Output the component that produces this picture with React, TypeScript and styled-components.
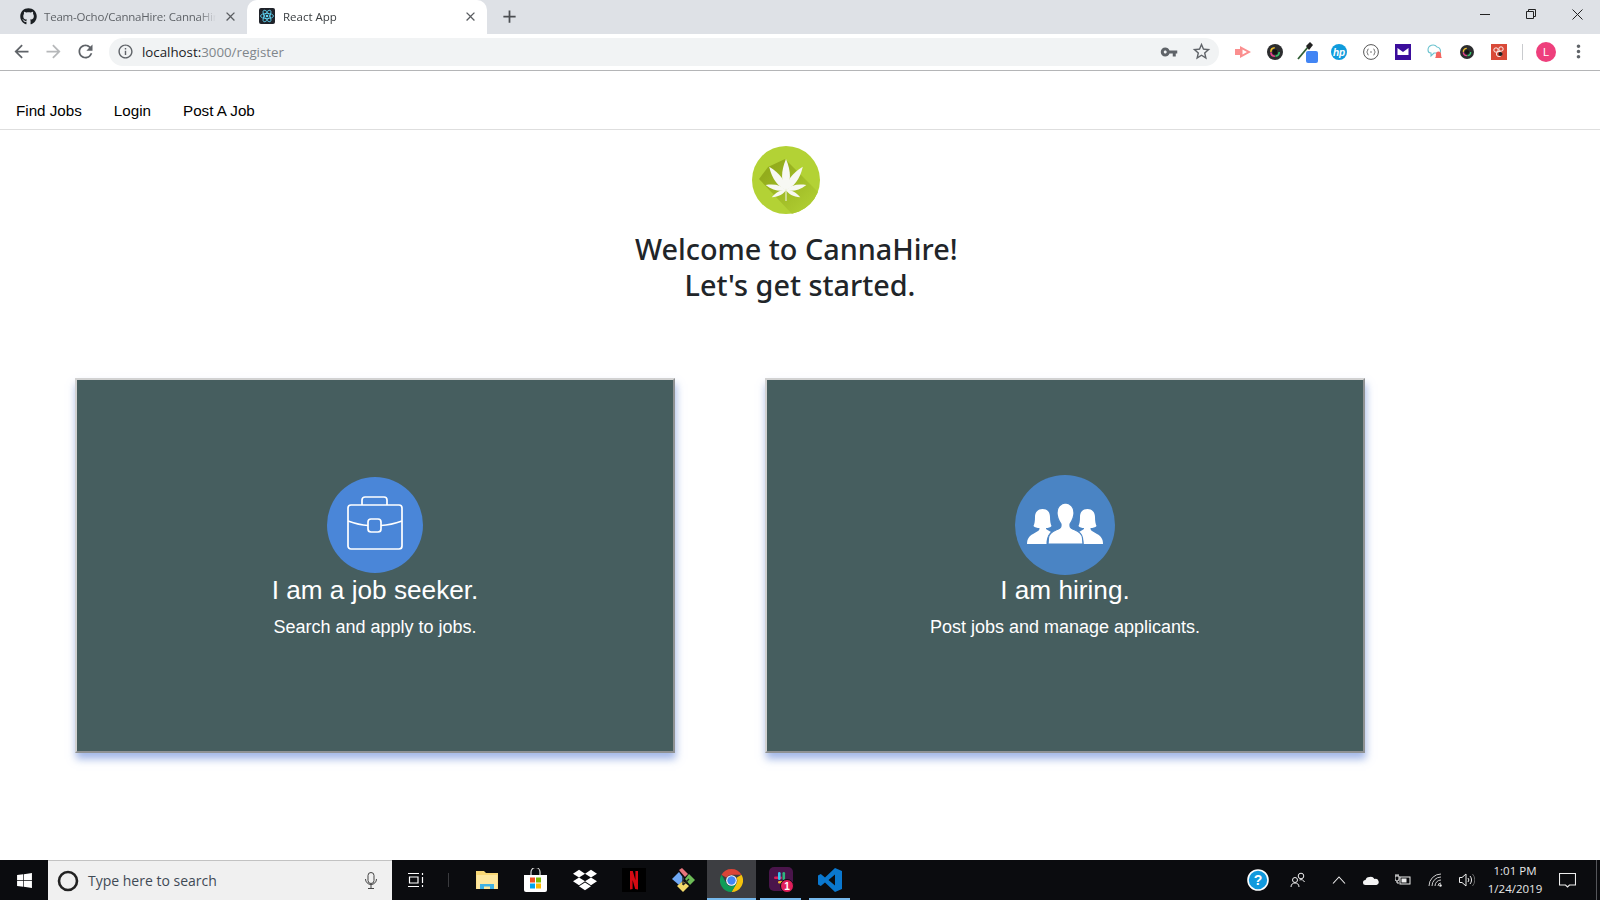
import React from "react";
import styled, { createGlobalStyle } from "styled-components";
import {
  MdAdd,
  MdArrowBack,
  MdArrowForward,
  MdClose,
  MdInfoOutline,
  MdMoreVert,
  MdRefresh,
  MdStarBorder,
  MdVpnKey,
} from "react-icons/md";
import { FaDropbox, FaGithub, FaWindows } from "react-icons/fa";

const GlobalStyle = createGlobalStyle`
  html, body {
    margin: 0;
    padding: 0;
    background: #fff;
    overflow: hidden;
  }
  * {
    box-sizing: border-box;
  }
`;

const Screen = styled.div`
  width: 1600px;
  height: 900px;
  display: flex;
  flex-direction: column;
  font-family: "Liberation Sans", Arial, sans-serif;
  overflow: hidden;
`;

/* browser chrome */
const TabStrip = styled.div`
  height: 34px;
  background: #dee1e6;
  display: flex;
  align-items: stretch;
  font-family: "Open Sans", "Noto Sans", sans-serif;
  font-size: 11.5px;
`;

const Tab = styled.div<{ $active?: boolean }>`
  width: ${(p) => (p.$active ? "240px" : "239px")};
  margin-left: ${(p) => (p.$active ? "0" : "8px")};
  display: flex;
  align-items: center;
  padding: 0 9px 2px 12px;
  gap: ${(p) => (p.$active ? "8px" : "7px")};
  background: ${(p) => (p.$active ? "#fff" : "transparent")};
  border-radius: 10px 10px 0 0;
  color: ${(p) => (p.$active ? "#3c4043" : "#5f6368")};
  letter-spacing: ${(p) => (p.$active ? "0" : "-0.2px")};
`;

const TabTitle = styled.span`
  flex: 1;
  white-space: nowrap;
  overflow: hidden;
  -webkit-mask-image: linear-gradient(90deg, #000 90%, transparent);
  mask-image: linear-gradient(90deg, #000 90%, transparent);
`;

const TabClose = styled(MdClose)`
  flex: none;
  font-size: 15px;
  color: #5a5d61;
`;

const NewTab = styled(MdAdd)`
  align-self: center;
  margin: 0 0 1px 12px;
  font-size: 21px;
  color: #4b4e52;
`;

const WindowControls = styled.div`
  margin-left: auto;
  display: flex;
  height: 28px;
  align-items: center;
`;

const WindowButton = styled.div`
  width: 46px;
  display: flex;
  justify-content: center;
  align-items: center;
`;

const Toolbar = styled.div`
  height: 37px;
  background: #fff;
  border-bottom: 1px solid #b4b5b7;
  display: flex;
  align-items: center;
  padding: 0 6px 1px 5px;
`;

const NavIcon = styled.div<{ $muted?: boolean }>`
  width: 32px;
  display: flex;
  justify-content: center;
  font-size: 21px;
  color: ${(p) => (p.$muted ? "#b6b8ba" : "#5f6368")};
`;

const Omnibox = styled.div`
  width: 1110px;
  height: 28px;
  margin: 0 8px 0 8px;
  padding: 0 2px 0 8px;
  border-radius: 14px;
  background: #f1f3f4;
  display: flex;
  align-items: center;
  color: #5f6368;
  font-family: "Open Sans", "Noto Sans", sans-serif;
  font-size: 13.3px;
`;

const Url = styled.span`
  margin-left: 8px;
  color: #80868b;
  flex: 1;
`;

const Host = styled.span`
  color: #202124;
`;

const OmniAction = styled.div`
  width: 32px;
  display: flex;
  justify-content: center;
  font-size: 18px;
  color: #5f6368;
`;

const Extension = styled.div`
  width: 32px;
  height: 24px;
  display: flex;
  align-items: center;
  justify-content: center;
  position: relative;
`;

const ToolbarDivider = styled.div`
  width: 1px;
  height: 16px;
  background: #c9cbce;
  margin: 0 7px 0 7px;
`;

const Avatar = styled.div`
  width: 20px;
  height: 20px;
  margin: 0 6px;
  border-radius: 50%;
  background: #ee3f7c;
  color: #fff;
  font-size: 11px;
  display: flex;
  align-items: center;
  justify-content: center;
`;

/* page */
const NavBar = styled.nav`
  height: 59px;
  flex: none;
  padding: 20px 16px 0;
  display: flex;
  align-items: center;
  gap: 32px;
  border-bottom: 1px solid #dedede;
`;

const NavLink = styled.a`
  color: #000;
  font-size: 15.2px;
  text-decoration: none;
`;

const Main = styled.main`
  flex: 1;
  background: #fff;
`;

const Hero = styled.header`
  padding-top: 16px;
  display: flex;
  flex-direction: column;
  align-items: center;
`;

const Logo = styled.svg`
  width: 68px;
  height: 68px;
  margin-right: 28px;
`;

const Heading = styled.h1`
  margin: 17px 0 0;
  text-align: center;
  color: #212529;
  font-family: "Noto Sans", "Open Sans", sans-serif;
  font-weight: 500;
  font-size: 28.8px;
  line-height: 36px;
`;

const Cards = styled.section`
  margin-top: 75px;
  padding-left: 75px;
  display: flex;
  gap: 90px;
`;

const Card = styled.div`
  width: 600px;
  height: 375px;
  padding-top: 95px;
  background: #465e5f;
  border: 2px solid #d2d2d2;
  border-right-color: #8f9293;
  border-bottom-color: #8f9293;
  box-shadow: 1px 6px 8px rgba(100, 135, 215, 0.6);
  display: flex;
  flex-direction: column;
  align-items: center;
  color: #fff;
`;

const IconCircle = styled.div<{ $size: number; $color: string }>`
  width: ${(p) => p.$size}px;
  height: ${(p) => p.$size}px;
  margin-top: ${(p) => (100 - p.$size) / 2}px;
  margin-bottom: ${(p) => (100 - p.$size) / 2}px;
  border-radius: 50%;
  background: ${(p) => p.$color};
  display: flex;
  align-items: center;
  justify-content: center;
`;

const BriefcaseIcon = styled.svg`
  width: 56px;
  height: 54px;
  margin-bottom: 5px;
`;

const TeamIcon = styled.svg`
  width: 76px;
  height: 42px;
  margin-bottom: 2px;
`;

const CardTitle = styled.div`
  font-size: 26.2px;
  line-height: 30px;
`;

const CardText = styled.div`
  font-size: 18px;
  line-height: 22px;
  margin-top: 11px;
`;

/* taskbar */
const Taskbar = styled.footer`
  height: 40px;
  flex: none;
  background: #0b0c0f;
  display: flex;
  align-items: stretch;
  color: #fff;
`;

const StartButton = styled.div`
  width: 48px;
  display: flex;
  align-items: center;
  justify-content: center;
  font-size: 17px;
`;

const SearchBox = styled.div`
  width: 344px;
  padding: 0 15px 0 9px;
  background: #f0f0f0;
  border-top: 1px solid #c2c2c2;
  display: flex;
  align-items: center;
  gap: 9px;
  color: #3f4a55;
  font-family: "Open Sans", "Noto Sans", sans-serif;
  font-size: 14px;
`;

const SearchText = styled.span`
  flex: 1;
`;

const TaskSlot = styled.div<{ $width?: number; $active?: boolean; $open?: boolean }>`
  width: ${(p) => p.$width ?? 49}px;
  position: relative;
  display: flex;
  align-items: center;
  justify-content: center;
  background: ${(p) => (p.$active ? "#3d3e42" : "transparent")};

  &::after {
    content: "";
    display: ${(p) => (p.$open ? "block" : "none")};
    position: absolute;
    left: ${(p) => (p.$active ? "0" : "4px")};
    right: ${(p) => (p.$active ? "0" : "4px")};
    bottom: 0;
    height: 2px;
    background: #76b9ed;
  }
`;

const TaskSeparator = styled.div`
  width: 1px;
  height: 14px;
  align-self: center;
  margin: 0 13px 0 8px;
  background: #3a3b3e;
`;

const SlackIcon = styled.svg`
  width: 27px;
  height: 27px;
  margin-left: 3px;
`;

const Tray = styled.div`
  margin-left: auto;
  display: flex;
`;

const TrayIcon = styled.div<{ $width?: number }>`
  width: ${(p) => p.$width ?? 32}px;
  display: flex;
  align-items: center;
  justify-content: center;
`;

const Clock = styled.div`
  width: 64px;
  font-family: "Open Sans", "Noto Sans", sans-serif;
  font-size: 11.5px;
  line-height: 18px;
  text-align: center;
  color: #e8e8e8;
  display: flex;
  flex-direction: column;
  justify-content: center;
`;

const ShowDesktop = styled.div`
  width: 10px;
  margin-right: 3px;
  border-right: 1px solid #55565a;
`;

const TrayGap = styled.div`
  width: 5px;
`;

const CannaLogo = () => {
  const leaflets = [
    { angle: 0, len: 31 },
    { angle: 36, len: 28.6 },
    { angle: -36, len: 28.6 },
    { angle: 76, len: 21 },
    { angle: -76, len: 21 },
    { angle: 117, len: 16 },
    { angle: -117, len: 16 },
  ];
  return (
    <Logo viewBox="0 0 68 68">
      <defs>
        <clipPath id="logoClip">
          <circle cx="34" cy="34" r="34" />
        </clipPath>
        <linearGradient id="logoShadow" x1="0.2" y1="0.2" x2="0.95" y2="0.95">
          <stop offset="0" stopColor="#93ac1c" />
          <stop offset="1" stopColor="#b3d235" />
        </linearGradient>
      </defs>
      <circle cx="34" cy="34" r="34" fill="#b3d235" />
      <polygon
        clipPath="url(#logoClip)"
        points="7,33 16,21 33,13 68,48 68,68 40,68"
        fill="url(#logoShadow)"
      />
      <g fill="#f7f8f3">
        {leaflets.map((l) => (
          <path
            key={l.angle}
            transform={`translate(34 44) rotate(${l.angle}) scale(${l.len / 31})`}
            d="M0 0 C-5 -8 -5.5 -18 0 -31 C5.5 -18 5 -8 0 0Z"
          />
        ))}
        <rect x="33.5" y="42" width="1" height="13" />
      </g>
    </Logo>
  );
};

const Briefcase = () => (
  <BriefcaseIcon viewBox="0 0 56 54" fill="none" stroke="#fff" strokeWidth="1.7">
    <path d="M15 9 V4 a3 3 0 0 1 3 -3 h19 a3 3 0 0 1 3 3 V9" />
    <rect x="1" y="9" width="54" height="44" rx="3" />
    <path d="M1 25 Q12 29 21 29.5 M34 29.5 Q44 29 55 25" />
    <rect x="21" y="23" width="13" height="13" rx="3" />
  </BriefcaseIcon>
);

const sideFigure =
  "M15.5 6 c5 0 7.5 3 7.5 8 c0 4 .5 7 1.5 9 c-1 1.5 -3.5 2 -5.5 2 c0 1 .3 1.5 1.5 2 L24 29 c-2.5 2 -4.5 6 -4.5 12 H0 c0 -5 2 -8 6 -10 l5 -3 c1 -.5 1.5 -1.5 1.5 -3 c-2 0 -5 -.5 -6 -2 c1 -2 1.5 -5 1.5 -9 c0 -5 3 -8 7.5 -8Z";

const Team = () => (
  <TeamIcon viewBox="0 0 76 42" fill="#fff">
    <path d={sideFigure} />
    <path d={sideFigure} transform="translate(76 0) scale(-1 1)" />
    <path
      stroke="#4a84c4"
      strokeWidth="1.2"
      d="M38 0 c5.5 0 9 4 9 10 c0 5 -2 8 -4 11 v2 c0 2 2 3 5 4 c5 2 7 4 7.5 8 l.5 6 H21 l.5 -6 c.5 -4 2.5 -6 7.5 -8 c3 -1 5 -2 5 -4 v-2 c-2 -3 -4 -6 -4 -11 c0 -6 3.5 -10 9 -10Z"
    />
  </TeamIcon>
);

const ReactFavicon = () => (
  <svg width="16" height="16" viewBox="0 0 16 16" style={{ flex: "none" }}>
    <rect width="16" height="16" rx="2" fill="#20232a" />
    <g fill="none" stroke="#61dafb" strokeWidth="0.8">
      <ellipse cx="8" cy="8" rx="6.5" ry="2.6" />
      <ellipse cx="8" cy="8" rx="6.5" ry="2.6" transform="rotate(60 8 8)" />
      <ellipse cx="8" cy="8" rx="6.5" ry="2.6" transform="rotate(120 8 8)" />
    </g>
    <circle cx="8" cy="8" r="1.3" fill="#61dafb" />
  </svg>
);

const CameraLens = ({ size }: { size: number }) => (
  <svg width={size} height={size} viewBox="0 0 16 16">
    <circle cx="8" cy="8" r="8" fill="#2c2d2f" />
    <circle cx="8" cy="8" r="4.2" fill="none" stroke="#39c36b" strokeWidth="1.6" strokeDasharray="6 20" />
    <circle cx="8" cy="8" r="4.2" fill="none" stroke="#e8428e" strokeWidth="1.6" strokeDasharray="6 20" strokeDashoffset="-6.5" />
    <circle cx="8" cy="8" r="4.2" fill="none" stroke="#f2c230" strokeWidth="1.6" strokeDasharray="6 20" strokeDashoffset="-13" />
    <circle cx="8" cy="8" r="2.4" fill="#121212" />
  </svg>
);

const Extensions = () => (
  <>
    <Extension>
      <svg width="17" height="14" viewBox="0 0 17 14">
        <rect x="0" y="4" width="5" height="6" fill="#fb8f8f" />
        <path d="M5 1 L16 7 L5 13Z M7.5 4.5 V9.5 L12 7Z" fill="#fb8f8f" fillRule="evenodd" />
      </svg>
    </Extension>
    <Extension>
      <CameraLens size={16} />
    </Extension>
    <Extension>
      <svg width="24" height="24" viewBox="0 0 24 24">
        <path d="M3 19 L13 7" stroke="#2f5d33" strokeWidth="1.8" />
        <path d="M11 6 L15 2 L18 5 L14 10Z" fill="#222" />
        <rect x="11" y="11" width="12" height="12" rx="2" fill="#4285f4" />
      </svg>
    </Extension>
    <Extension>
      <svg width="16" height="16" viewBox="0 0 16 16">
        <circle cx="8" cy="8" r="8" fill="#0f9bdc" />
        <text x="8" y="11.5" fill="#fff" fontSize="10" fontStyle="italic" fontWeight="700" fontFamily="Liberation Sans" textAnchor="middle">
          hp
        </text>
      </svg>
    </Extension>
    <Extension>
      <svg width="16" height="16" viewBox="0 0 16 16" fill="none" stroke="#555">
        <circle cx="8" cy="8" r="7.4" />
        <path d="M5.6 5 q-1 0 -1 1 v1 l-1 1 l1 1 v1 q0 1 1 1 M10.4 5 q1 0 1 1 v1 l1 1 l-1 1 v1 q0 1 -1 1 M7 8 h2" strokeWidth="0.8" />
      </svg>
    </Extension>
    <Extension>
      <svg width="16" height="16" viewBox="0 0 16 16">
        <rect width="16" height="16" fill="#3b0d9c" />
        <path d="M2.5 4 H13.5 V11 H2.5Z" fill="#fff" />
        <path d="M2.5 4 L8 8 L13.5 4" fill="#3b0d9c" />
      </svg>
    </Extension>
    <Extension>
      <svg width="18" height="17" viewBox="0 0 18 17">
        <path d="M2 7 a5 5 0 0 1 9 -3 a4 4 0 0 1 3 6 H8 l-3 3 v-3 a3 3 0 0 1 -3 -3Z" fill="none" stroke="#6cc3cf" strokeWidth="1.1" />
        <path d="M9 15 q1 -1 1 -4 a2.5 2.5 0 0 1 5 0 q0 3 1 4Z" fill="#f4655f" />
      </svg>
    </Extension>
    <Extension>
      <CameraLens size={14} />
    </Extension>
    <Extension>
      <svg width="16" height="16" viewBox="0 0 16 16">
        <rect width="16" height="16" fill="#d94a38" />
        <g fill="none" stroke="#fff" strokeWidth="0.9">
          <circle cx="5" cy="6" r="2.2" />
          <circle cx="10" cy="5" r="2.2" />
          <circle cx="8" cy="10" r="2.6" />
        </g>
        <circle cx="9.5" cy="10" r="2" fill="#222" />
      </svg>
    </Extension>
  </>
);

const ChromeIcon = () => (
  <svg width="23" height="23" viewBox="0 0 24 24">
    <path d="M12 0 A12 12 0 0 1 22.4 6 H12 A6 6 0 0 0 6.8 9 L1.6 6 A12 12 0 0 1 12 0Z" fill="#db4437" />
    <path d="M22.4 6 A12 12 0 0 1 12 24 L17.2 15 A6 6 0 0 0 17.2 9 Z" fill="#f4c20d" />
    <path d="M12 24 A12 12 0 0 1 1.6 6 L6.8 15 A6 6 0 0 0 12 18 L17.2 15Z" fill="#0f9d58" />
    <circle cx="12" cy="12" r="5.6" fill="#fff" />
    <circle cx="12" cy="12" r="4.4" fill="#4285f4" />
  </svg>
);

const TaskIcons = () => (
  <>
    <TaskSlot>
      <svg width="22" height="20" viewBox="0 0 22 20">
        <path d="M0 1 H8 L10 3 H22 V19 H0Z" fill="#f8d775" />
        <rect x="0.5" y="5" width="21" height="14" fill="#fde79f" />
        <path d="M4 19 V14 H18 V19 H14 V16.5 H8 V19Z" fill="#3fb1e3" />
      </svg>
    </TaskSlot>
    <TaskSlot>
      <svg width="23" height="24" viewBox="0 0 23 24">
        <path d="M7 7 V4 a4.5 4.5 0 0 1 9 0 V7" fill="none" stroke="#ddd" strokeWidth="1.2" />
        <path d="M0 7 H23 V22 a2 2 0 0 1 -2 2 H2 a2 2 0 0 1 -2 -2Z" fill="#fff" />
        <rect x="6" y="9.5" width="5" height="5" fill="#f25022" />
        <rect x="12" y="9.5" width="5" height="5" fill="#7fba00" />
        <rect x="6" y="15.5" width="5" height="5" fill="#00a4ef" />
        <rect x="12" y="15.5" width="5" height="5" fill="#ffb900" />
      </svg>
    </TaskSlot>
    <TaskSlot>
      <FaDropbox size={24} color="#fff" />
    </TaskSlot>
    <TaskSlot>
      <svg width="24" height="24" viewBox="0 0 24 24">
        <rect width="24" height="24" fill="#000" />
        <path d="M8 3 H10.8 L16 21.5 L13.2 21 L8 3Z M8 3 H10.6 V21 L8 21.5Z M13.4 3 H16 V21.5 L13.4 21Z" fill="#d50a13" />
      </svg>
    </TaskSlot>
    <TaskSlot>
      <svg width="24" height="24" viewBox="0 0 24 24">
        <path d="M1 11 L8 4 L13 11 L8 17Z" fill="#6fa8f5" />
        <path d="M14 11 L18 6 L24 12 L19 17Z" fill="#6dbb57" />
        <path d="M6 18 L12 13 L18 18 L12 24Z" fill="#f3d96a" />
        <path d="M8 2 L11 0 L17 6 L14 9Z" fill="#e8757c" />
        <path d="M12 9 V17 M12 17 L18 11" stroke="#222" strokeWidth="1.4" fill="none" />
      </svg>
    </TaskSlot>
    <TaskSlot $active $open>
      <ChromeIcon />
    </TaskSlot>
    <TaskSlot $open>
      <SlackIcon viewBox="0 0 27 27">
        <rect width="24" height="24" rx="5" fill="#4a154b" />
        <rect x="5" y="9.5" width="8" height="2.6" rx="1.3" fill="#e01e5a" />
        <rect x="9" y="5" width="2.6" height="8" rx="1.3" fill="#36c5f0" />
        <rect x="13.5" y="5" width="2.6" height="8" rx="1.3" fill="#2eb67d" />
        <rect x="9" y="14" width="8" height="2.6" rx="1.3" fill="#ecb22e" />
        <circle cx="18" cy="19" r="6.5" fill="#e01e5a" stroke="#0b0c0f" strokeWidth="1" />
        <text x="18" y="22.5" fill="#fff" fontSize="10" fontWeight="700" textAnchor="middle" fontFamily="Liberation Sans">
          1
        </text>
      </SlackIcon>
    </TaskSlot>
    <TaskSlot $open>
      <svg width="24" height="24" viewBox="0 0 24 24">
        <path d="M17 0 L24 3 V21 L17 24 L7 14.5 L2.8 18 L0 16.5 V7.5 L2.8 6 L7 9.5Z M17 6.5 L10.5 12 L17 17.5Z" fill="#0a78cf" fillRule="evenodd" />
      </svg>
    </TaskSlot>
  </>
);

const TrayIcons = () => (
  <>
    <TrayIcon $width={40}>
      <svg width="22" height="22" viewBox="0 0 22 22">
        <circle cx="11" cy="11" r="10" fill="#1199dd" stroke="#fff" strokeWidth="1.6" />
        <text x="11" y="16" fill="#fff" fontSize="14" fontWeight="700" fontFamily="Liberation Sans" textAnchor="middle">
          ?
        </text>
      </svg>
    </TrayIcon>
    <TrayIcon $width={40}>
      <svg width="16" height="16" viewBox="0 0 16 16" fill="none" stroke="#eee" strokeWidth="1">
        <circle cx="11" cy="4" r="2.8" />
        <circle cx="5" cy="8" r="2.5" />
        <path d="M1 15 c0 -3 2 -4 4 -4 s4 1 4 4 M9.5 8 c2 -1 4 0 5 2" />
      </svg>
    </TrayIcon>
    <TrayGap />
    <TrayIcon>
      <svg width="14" height="8" viewBox="0 0 14 8" fill="none" stroke="#eee" strokeWidth="1.1">
        <path d="M1 7.5 L7 1 L13 7.5" />
      </svg>
    </TrayIcon>
    <TrayIcon>
      <svg width="16" height="10" viewBox="0 0 16 10" fill="#f4f4f4">
        <path d="M2.5 10 a2.5 2.5 0 0 1 0 -5 a4 4 0 0 1 4 -3 a4.5 4.5 0 0 1 5 2 a3 3 0 0 1 2 6Z" />
      </svg>
    </TrayIcon>
    <TrayIcon>
      <svg width="16" height="12" viewBox="0 0 16 12" fill="none" stroke="#eee" strokeWidth="1">
        <path d="M0 2 H4 V5 a2 2 0 0 1 -4 0Z M1 0 V2 M3 0 V2 M2 7 V9 H4" />
        <rect x="5" y="3" width="10" height="7" />
        <rect x="6.5" y="4.5" width="5" height="4" fill="#eee" stroke="none" />
      </svg>
    </TrayIcon>
    <TrayIcon>
      <svg width="15" height="14" viewBox="0 0 15 14" fill="none" stroke="#ccc" strokeWidth="1">
        <path d="M1 13 A12 12 0 0 1 13 1 M4 13 A9 9 0 0 1 13 4 M7 13 A6 6 0 0 1 13 7 M10 13 A3 3 0 0 1 13 10" />
        <circle cx="12.5" cy="12.5" r="1.2" fill="#eee" stroke="none" />
      </svg>
    </TrayIcon>
    <TrayIcon>
      <svg width="16" height="14" viewBox="0 0 16 14" fill="none" stroke="#eee" strokeWidth="1">
        <path d="M0.5 4.5 H3 L7 1 V13 L3 9.5 H0.5Z M9 5 a3 3 0 0 1 0 4 M11 3 a6 6 0 0 1 0 8" />
        <path d="M13.5 1 a9 9 0 0 1 0 12" stroke="#666" />
      </svg>
    </TrayIcon>
    <Clock>
      <span>1:01 PM</span>
      <span>1/24/2019</span>
    </Clock>
    <TrayIcon $width={40}>
      <svg width="17" height="15" viewBox="0 0 17 15" fill="none" stroke="#eee" strokeWidth="1.1">
        <path d="M0.5 0.5 H16.5 V12 H10.5 L8.5 14 L6.5 12 H0.5Z" />
      </svg>
    </TrayIcon>
    <ShowDesktop />
  </>
);

const App = () => (
  <Screen>
    <GlobalStyle />
    <TabStrip>
      <Tab>
        <FaGithub size={17} color="#1b1f23" style={{ flex: "none" }} />
        <TabTitle>Team-Ocho/CannaHire: CannaHire helps</TabTitle>
        <TabClose />
      </Tab>
      <Tab $active>
        <ReactFavicon />
        <TabTitle>React App</TabTitle>
        <TabClose />
      </Tab>
      <NewTab />
      <WindowControls>
        <WindowButton>
          <svg width="10" height="10" viewBox="0 0 10 10" stroke="#222">
            <path d="M0 5.5 H10" />
          </svg>
        </WindowButton>
        <WindowButton>
          <svg width="10" height="10" viewBox="0 0 10 10" fill="none" stroke="#222">
            <path d="M0.5 2.5 H7.5 V9.5 H0.5Z M2.5 2.5 V0.5 H9.5 V7.5 H7.5" />
          </svg>
        </WindowButton>
        <WindowButton>
          <svg width="11" height="11" viewBox="0 0 11 11" stroke="#222">
            <path d="M0.5 0.5 L10.5 10.5 M10.5 0.5 L0.5 10.5" />
          </svg>
        </WindowButton>
      </WindowControls>
    </TabStrip>
    <Toolbar>
      <NavIcon>
        <MdArrowBack />
      </NavIcon>
      <NavIcon $muted>
        <MdArrowForward />
      </NavIcon>
      <NavIcon>
        <MdRefresh />
      </NavIcon>
      <Omnibox>
        <MdInfoOutline size={17} />
        <Url>
          <Host>localhost:</Host>3000/register
        </Url>
        <OmniAction>
          <MdVpnKey />
        </OmniAction>
        <OmniAction>
          <MdStarBorder size={21} />
        </OmniAction>
      </Omnibox>
      <Extensions />
      <ToolbarDivider />
      <Avatar>L</Avatar>
      <NavIcon>
        <MdMoreVert />
      </NavIcon>
    </Toolbar>
    <NavBar>
      <NavLink href="#">Find Jobs</NavLink>
      <NavLink href="#">Login</NavLink>
      <NavLink href="#">Post A Job</NavLink>
    </NavBar>
    <Main>
      <Hero>
        <CannaLogo />
        <Heading>
          Welcome to CannaHire!&nbsp;
          <br />
          Let's get started.
        </Heading>
      </Hero>
      <Cards>
        <Card>
          <IconCircle $size={96} $color="#4a86d8">
            <Briefcase />
          </IconCircle>
          <CardTitle>I am a job seeker.</CardTitle>
          <CardText>Search and apply to jobs.</CardText>
        </Card>
        <Card>
          <IconCircle $size={100} $color="#4a84c4">
            <Team />
          </IconCircle>
          <CardTitle>I am hiring.</CardTitle>
          <CardText>Post jobs and manage applicants.</CardText>
        </Card>
      </Cards>
    </Main>
    <Taskbar>
      <StartButton>
        <FaWindows />
      </StartButton>
      <SearchBox>
        <svg width="22" height="22" viewBox="0 0 22 22" fill="none" stroke="#222" strokeWidth="2.6">
          <circle cx="11" cy="11" r="9" />
        </svg>
        <SearchText>Type here to search</SearchText>
        <svg width="12" height="17" viewBox="0 0 12 17" fill="none" stroke="#444" strokeWidth="1">
          <rect x="3" y="0.5" width="6" height="11" rx="3" />
          <path d="M0.5 7 a5.5 5.5 0 0 0 11 0 M6 12.5 V16 M3 16.5 H9" />
        </svg>
      </SearchBox>
      <TaskSlot $width={48}>
        <svg width="16" height="16" viewBox="0 0 16 16" fill="none" stroke="#fff" strokeWidth="1.2">
          <path d="M0 1.5 H11 M0 14.5 H11 M1.5 5 H10 V11 H1.5Z M14.5 1 V3 M14.5 5 V11 M14.5 13 V15" />
        </svg>
      </TaskSlot>
      <TaskSeparator />
      <TaskIcons />
      <Tray>
        <TrayIcons />
      </Tray>
    </Taskbar>
  </Screen>
);

export default App;
